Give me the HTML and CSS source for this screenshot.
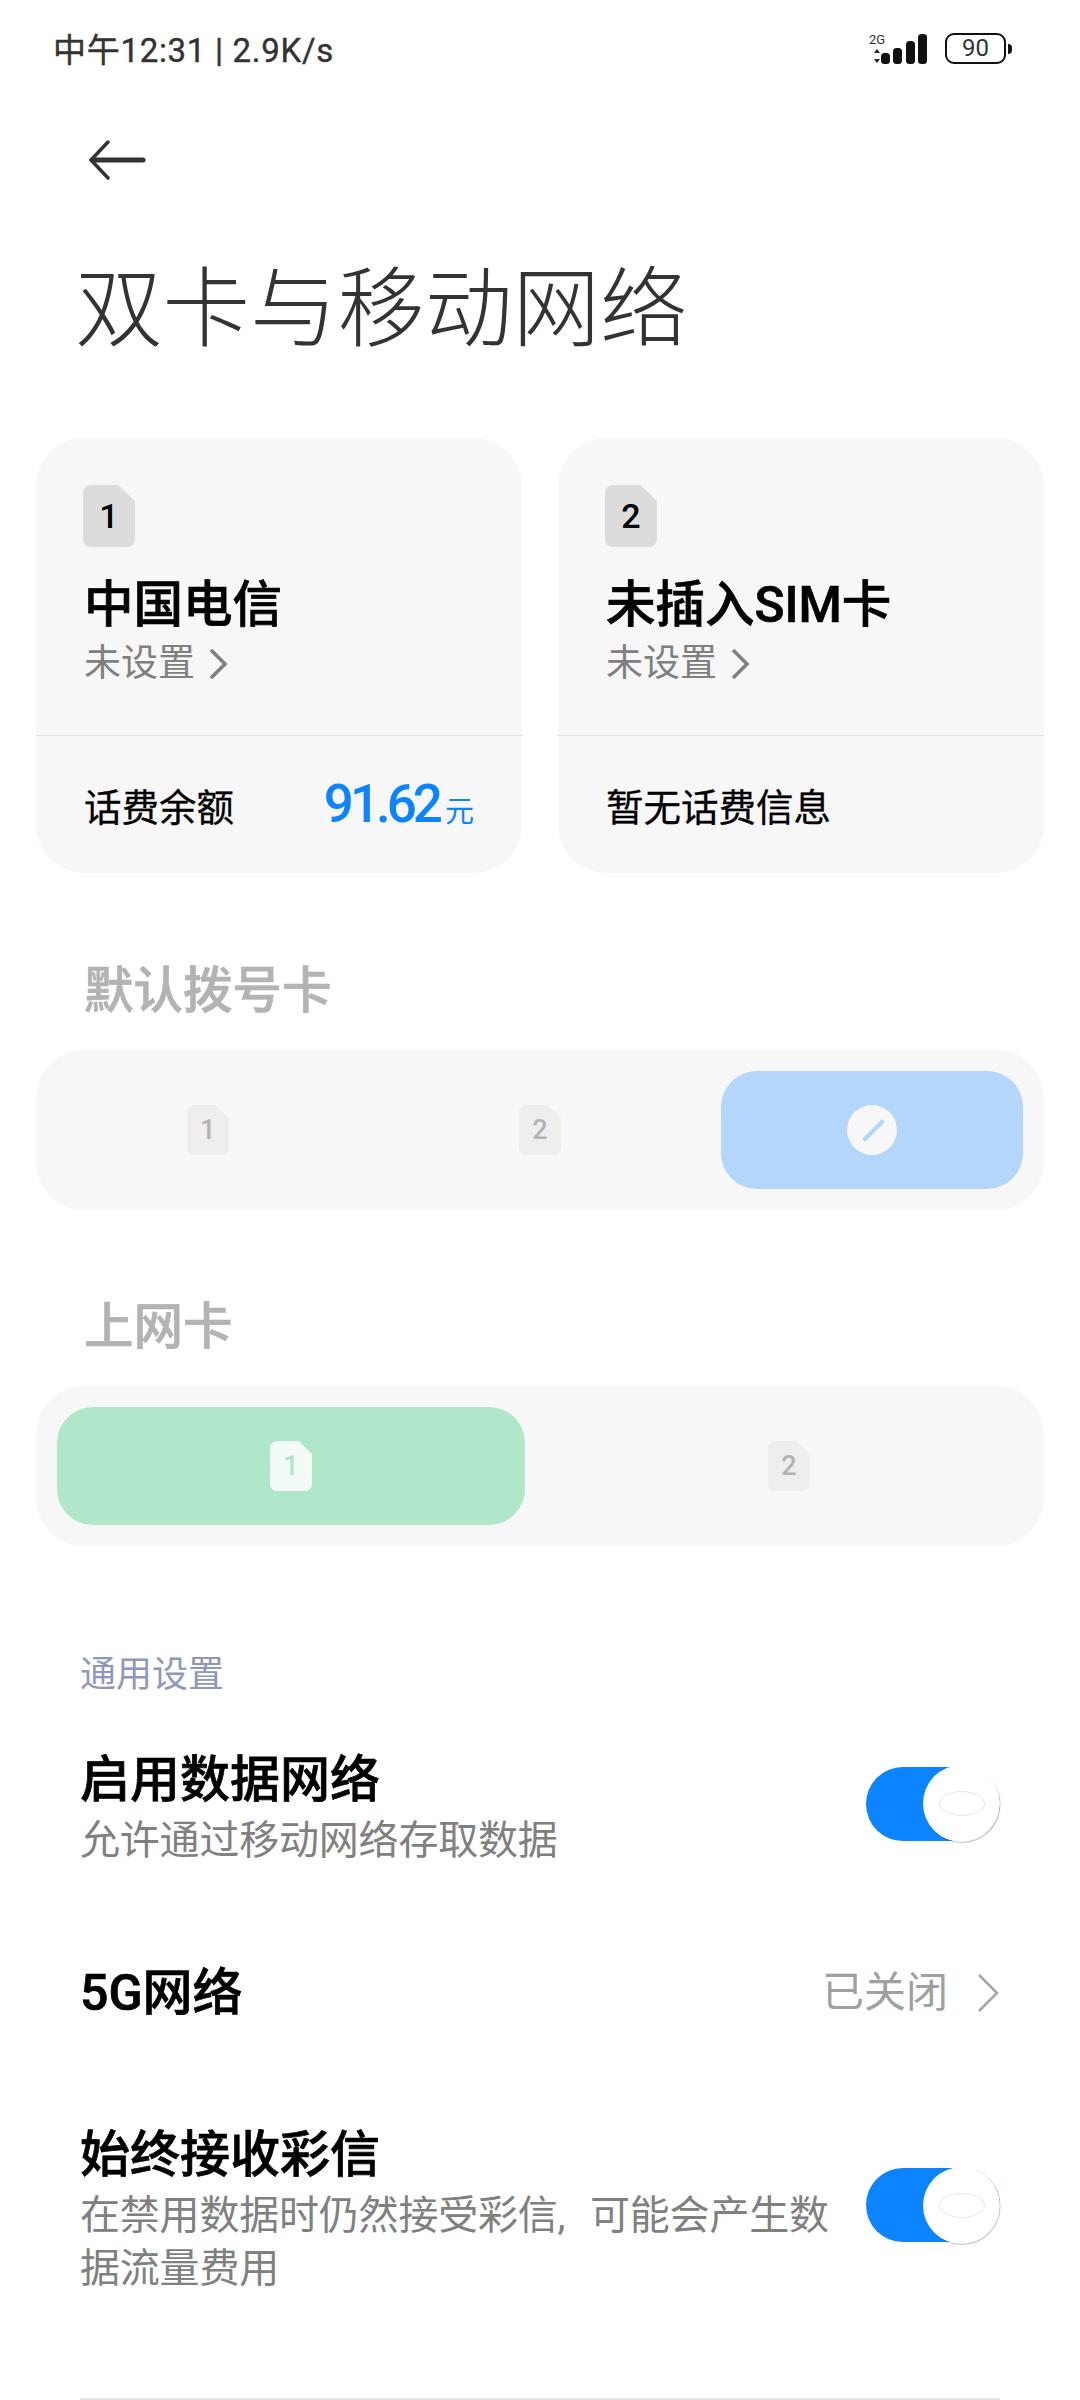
FILE: index.html
```html
<!DOCTYPE html>
<html lang="zh-CN">
<head>
  <meta charset="UTF-8">
  <title>双卡与移动网络</title>
  <link rel="stylesheet" href="styles.css">
</head>
<body>
  <header class="status-bar">
    <span class="status-text">中午12:31 | 2.9K/s</span>
    <div class="status-icons">
      <div class="net">
        <span class="net-type">2G</span>
        <svg class="net-arrows" width="8" height="16" viewBox="0 0 8 16">
          <path d="M4 1 7 5H1zM4 15 1 11H7z" fill="#222"/>
        </svg>
      </div>
      <svg class="signal" width="47" height="30" viewBox="0 0 47 30">
        <rect x="0" y="19" width="9" height="11" rx="3.5"/>
        <rect x="12" y="14" width="9" height="16" rx="3.5"/>
        <rect x="25" y="7" width="9" height="23" rx="3.5"/>
        <rect x="37" y="0" width="9" height="30" rx="3.5"/>
      </svg>
      <div class="battery"><span>90</span></div>
      <div class="battery-nub"></div>
    </div>
  </header>

  <div class="back">
    <svg width="60" height="40" viewBox="0 0 60 40" fill="none" stroke="#333">
      <path d="M21 2 4 20 21 38" stroke-width="3.5" stroke-linecap="round" stroke-linejoin="round"/>
      <path d="M5 20H56" stroke-width="5" stroke-linecap="round"/>
    </svg>
  </div>

  <h1 class="page-title">双卡与移动网络</h1>

  <section class="cards">
    <div class="card">
      <div class="card-top">
        <div class="sim">1</div>
        <div class="card-name">中国电信</div>
        <div class="card-sub">未设置
          <svg width="20" height="32" viewBox="0 0 20 32" fill="none" stroke="#808080" stroke-width="3.6">
            <path d="M3 2 17 16 3 30"/>
          </svg>
        </div>
      </div>
      <div class="card-bottom">
        <span>话费余额</span>
        <span class="balance">91.62<small>元</small></span>
      </div>
    </div>
    <div class="card">
      <div class="card-top">
        <div class="sim">2</div>
        <div class="card-name">未插入SIM卡</div>
        <div class="card-sub">未设置
          <svg width="20" height="32" viewBox="0 0 20 32" fill="none" stroke="#808080" stroke-width="3.6">
            <path d="M3 2 17 16 3 30"/>
          </svg>
        </div>
      </div>
      <div class="card-bottom">
        <span>暂无话费信息</span>
      </div>
    </div>
  </section>

  <h2 class="picker-title first">默认拨号卡</h2>
  <div class="picker three">
    <div class="option"><div class="sim-small">1</div></div>
    <div class="option"><div class="sim-small">2</div></div>
    <div class="option active-blue">
      <div class="pen">
        <svg width="50" height="50" viewBox="0 0 50 50">
          <path d="M18 34 35 17" stroke="#b3d6fa" stroke-width="4.5" stroke-linecap="round"/>
        </svg>
      </div>
    </div>
  </div>

  <h2 class="picker-title second">上网卡</h2>
  <div class="picker two">
    <div class="option active-green"><div class="sim-small on">1</div></div>
    <div class="option"><div class="sim-small">2</div></div>
  </div>

  <div class="section-label">通用设置</div>

  <div class="row row-first">
    <div class="row-text">
      <div class="row-title">启用数据网络</div>
      <div class="row-sub">允许通过移动网络存取数据</div>
    </div>
    <div class="toggle"><div class="knob"><div class="knob-ring"></div></div></div>
  </div>

  <div class="row row-five">
    <div class="row-title">5G网络</div>
    <div class="row-value">已关闭
      <svg width="24" height="40" viewBox="0 0 24 40" fill="none" stroke="#a6a6a6" stroke-width="2.6">
        <path d="M3 2 21 20 3 38"/>
      </svg>
    </div>
  </div>

  <div class="row row-mms">
    <div class="row-text">
      <div class="row-title">始终接收彩信</div>
      <div class="row-sub">在禁用数据时仍然接受彩信, 可能会产生数据流量费用</div>
    </div>
    <div class="toggle"><div class="knob"><div class="knob-ring"></div></div></div>
  </div>

  <div class="bottom-line"></div>
</body>
</html>
```

FILE: styles.css
```css
* {
  box-sizing: border-box;
}
html, body {
  margin: 0;
  height: 2400px;
  overflow: hidden;
}
body {
  background-color: #fff;
  color: #000;
  font-family: Roboto, "Noto Sans CJK SC", sans-serif;
}

.status-bar {
  display: flex;
  justify-content: space-between;
  align-items: center;
  height: 100px;
  padding: 0 68px 4px 53px;
}
.status-text {
  font-size: 33px;
  color: #333;
  letter-spacing: 0.7px;
  -webkit-text-stroke: 0.4px #333;
}
.status-icons {
  display: flex;
  align-items: flex-end;
  height: 31px;
}
.net {
  display: flex;
  flex-direction: column;
  align-items: flex-start;
  width: 12px;
  height: 30px;
}
.net-type {
  font-size: 13px;
  line-height: 12px;
  color: #333;
  margin-bottom: 2px;
  white-space: nowrap;
}
.net-arrows {
  margin-left: 4px;
}
.signal {
  fill: #111;
}
.battery {
  display: flex;
  align-items: center;
  justify-content: center;
  width: 61px;
  height: 31px;
  margin-left: 17px;
  border: 2.5px solid #111;
  border-radius: 9px;
  font-size: 24px;
  color: #333;
}
.battery-nub {
  width: 4px;
  height: 10px;
  margin: 0 0 10px 2px;
  background-color: #111;
  border-radius: 0 5px 5px 0;
}

.back {
  height: 40px;
  margin-top: 40px;
  padding-left: 87px;
}
.page-title {
  margin: 80px 0 0 75px;
  font-size: 87.5px;
  line-height: 100px;
  font-weight: 300;
  color: #333;
}

.cards {
  display: grid;
  grid-template-columns: 486px 486px;
  gap: 36px;
  margin: 78px 36px 0;
}
.card {
  height: 435px;
  background-color: #f7f7f7;
  border-radius: 48px;
}
.card-top {
  height: 297.5px;
  padding: 47px 0 0 47px;
  border-bottom: 1.5px solid #e3e3e3;
}
.sim {
  display: flex;
  align-items: center;
  justify-content: center;
  width: 52px;
  height: 62px;
  background-color: #dcdcdc;
  border-radius: 8px;
  clip-path: polygon(0 0, 68% 0, 100% 26%, 100% 100%, 0 100%);
  font-size: 34px;
  font-weight: 500;
}
.card-name {
  margin: 28px 0 0 1px;
  font-size: 49.5px;
  line-height: 60px;
  font-weight: 500;
  -webkit-text-stroke: 0.7px #000;
}
.card-sub {
  display: flex;
  align-items: center;
  gap: 13px;
  margin-left: 1px;
  font-size: 37px;
  line-height: 58px;
  color: #808080;
}
.card-bottom {
  display: flex;
  justify-content: space-between;
  align-items: center;
  height: 137px;
  padding: 0 48px;
  font-size: 37.5px;
  -webkit-text-stroke: 0.3px #000;
}
.balance {
  font-size: 53px;
  font-weight: 500;
  letter-spacing: -4px;
  color: #0d84ff;
  -webkit-text-stroke: 0;
}
.balance small {
  margin-left: 6px;
  font-size: 29px;
  font-weight: 400;
  letter-spacing: 0;
}

.picker-title {
  margin: 0 0 0 84px;
  font-size: 49.5px;
  line-height: 60px;
  font-weight: 500;
  color: #b3b3b3;
  -webkit-text-stroke: 0.7px #b3b3b3;
}
.picker-title.first {
  margin-top: 88px;
}
.picker-title.second {
  margin-top: 87px;
}
.picker {
  display: grid;
  height: 160px;
  margin: 29px 36px 0;
  padding: 21px;
  background-color: #f7f7f7;
  border-radius: 48px;
}
.picker.three {
  grid-template-columns: repeat(3, 1fr);
  gap: 30px;
}
.picker.two {
  grid-template-columns: repeat(2, 1fr);
  gap: 30px;
}
.option {
  display: flex;
  align-items: center;
  justify-content: center;
  border-radius: 36px;
}
.active-blue {
  background-color: #b3d6fa;
}
.active-green {
  background-color: #b0e6ca;
}
.sim-small {
  display: flex;
  align-items: center;
  justify-content: center;
  width: 42px;
  height: 50px;
  background-color: #eee;
  border-radius: 7px;
  clip-path: polygon(0 0, 68% 0, 100% 26%, 100% 100%, 0 100%);
  font-size: 27px;
  font-weight: 500;
  color: #b3b3b3;
}
.sim-small.on {
  background-color: #f3fbf7;
  color: #b0e6ca;
}
.pen {
  width: 50px;
  height: 50px;
  background-color: #f7f7f7;
  border-radius: 50%;
}

.section-label {
  margin: 104px 0 0 80px;
  font-size: 36px;
  line-height: 50px;
  color: #8f97bd;
}
.row {
  display: flex;
  justify-content: space-between;
  align-items: center;
  padding: 0 80px;
}
.row-first {
  margin-top: 50px;
}
.row-five {
  margin-top: 96px;
}
.row-mms {
  margin-top: 102px;
}
.row-text {
  width: 770px;
}
.row-title {
  font-size: 50px;
  line-height: 60px;
  font-weight: 500;
  -webkit-text-stroke: 0.7px #000;
}
.row-sub {
  margin-top: 4px;
  font-size: 40px;
  line-height: 53px;
  color: #808080;
  letter-spacing: -0.2px;
  word-spacing: 15px;
}
.row-value {
  display: flex;
  align-items: center;
  gap: 28px;
  font-size: 42px;
  line-height: 60px;
  color: #a0a0a0;
}
.toggle {
  position: relative;
  width: 134px;
  height: 74px;
  margin-bottom: 10px;
  background-color: #0d84ff;
  border-radius: 37px;
}
.knob {
  position: absolute;
  top: -1.5px;
  right: 0;
  display: flex;
  align-items: center;
  justify-content: center;
  width: 77px;
  height: 77px;
  background-color: #fff;
  border-radius: 50%;
  box-shadow: 0.5px 1px 1px rgba(0, 0, 0, 0.25);
}
.knob-ring {
  width: 46px;
  height: 25px;
  border: 1px solid #e6e6e6;
  border-radius: 50%;
}
.bottom-line {
  height: 2px;
  margin: 103px 80px 0;
  background-color: #e6e6e6;
}
```
